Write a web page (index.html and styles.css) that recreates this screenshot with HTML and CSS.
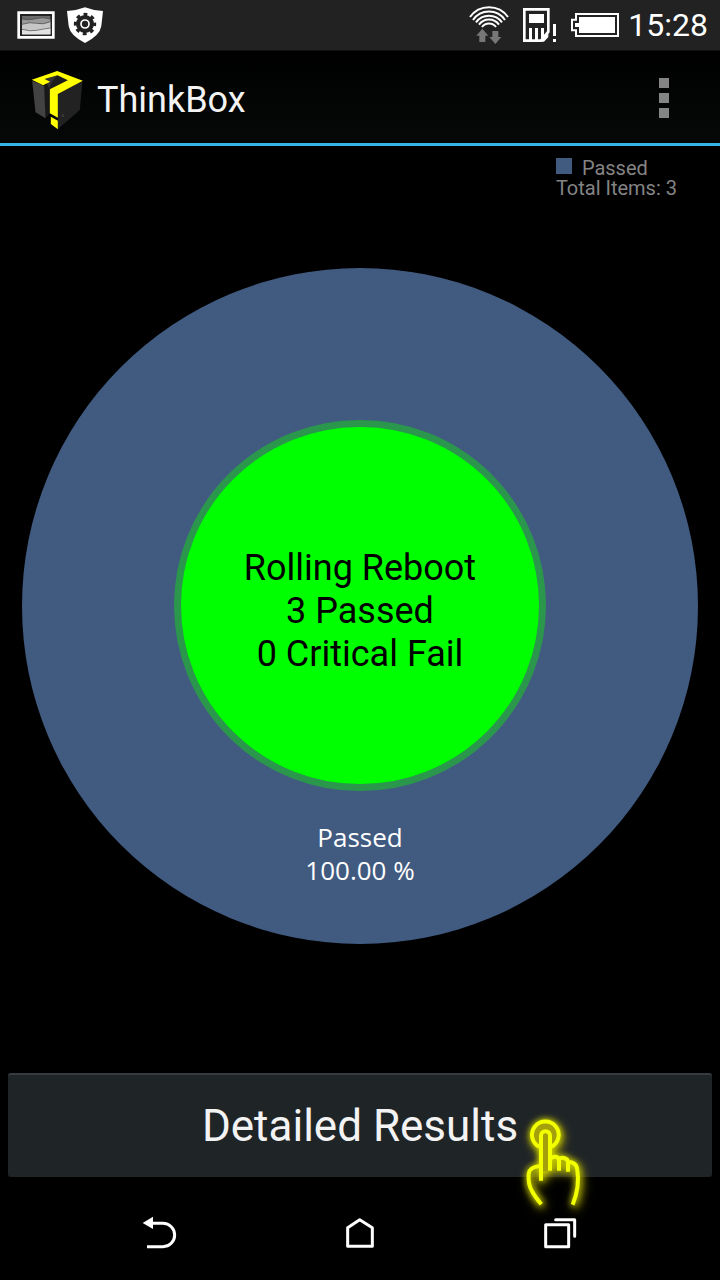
FILE: index.html
```html
<!DOCTYPE html>
<html lang="en">
<head>
<meta charset="utf-8">
<meta name="viewport" content="width=device-width, initial-scale=1">
<title>ThinkBox</title>
<link rel="stylesheet" href="styles.css">
</head>
<body>
<div class="status-bar">
  <div class="status-group">
    <svg class="icon-picture" viewBox="51 33 114 84" aria-hidden="true">
      <path fill="#fff" d="M52 34h112v82H52z"/>
      <path fill="#222" d="M60 42h96v66H60z"/>
      <path fill="#6a6a6a" d="M66 48h85v55H66z"/>
      <path fill="#999" d="M66 57q22 5 42-1t43 1v46H66z"/>
      <path fill="#c6c6c6" d="M66 73q24-8 44-3t41-5v38H66z"/>
      <path fill="#e2e2e2" d="M66 88q24 7 44 3t41-7v19H66z"/>
      <path fill="none" stroke="#444" stroke-width="2" d="M66 57q22 5 42-1t43 1M66 73q24-8 44-3t41-5M66 88q24 7 44 3t41-7"/>
    </svg>
    <svg class="icon-shield" viewBox="198 21 108 108" aria-hidden="true">
      <path fill="#fff" d="M252 22Q277 32 306 33Q303 60 301 78Q297 106 252 129Q207 106 203 78Q201 60 198 33Q227 32 252 22z"/>
      <circle cx="252" cy="72" r="22" fill="none" stroke="#222" stroke-width="10"/>
      <circle cx="252" cy="72" r="28" fill="none" stroke="#222" stroke-width="11" stroke-dasharray="11 10.99" stroke-dashoffset="5"/>
      <circle cx="252" cy="72" r="19" fill="#222"/>
      <circle cx="252" cy="72" r="12" fill="none" stroke="#fff" stroke-width="5"/>
    </svg>
  </div>
  <div class="status-group">
    <svg class="icon-wifi" viewBox="30 12 126 126" aria-hidden="true">
      <g fill="none" stroke="#fff" stroke-width="6">
        <path d="M36 51A70 70 0 0 1 150 51"/>
        <path d="M45 60A58 58 0 0 1 141 60"/>
        <path d="M54 67A48 48 0 0 1 132 67"/>
        <path d="M63 74A37 37 0 0 1 123 74"/>
        <path d="M72 81A26 26 0 0 1 114 81"/>
      </g>
      <path fill="#777" d="M73 86l18 21H82v19H64v-19H55zM112 132L94 111h9V93h18v18h9z"/>
    </svg>
    <svg class="icon-card" viewBox="192 21 108 108" aria-hidden="true">
      <path fill="none" stroke="#fff" stroke-width="8" d="M199 28h72v67l-22 27H199z"/>
      <path fill="#fff" d="M213 42h45v27h-45zM213 84h9v38h-9zM231 84h9v38h-9zM249 84h9v24l13-13v16l-13 14h-9zM285 72h9v36h-9zM285 117h9v9h-9z"/>
    </svg>
    <svg class="icon-battery" viewBox="330 36 150 78" aria-hidden="true">
      <path fill="none" stroke="#fff" stroke-width="6" d="M348 42h126v66H348V91H336V59h12z"/>
      <path fill="#fff" d="M357 51h108v48H357V81H345V69h12z"/>
    </svg>
    <time class="clock">15:28</time>
  </div>
</div>

<header class="app-bar">
  <svg class="logo" viewBox="94 60 158 180" aria-hidden="true">
    <path fill="#181818" d="M132 107l18-9v93l-14 14z"/>
    <path fill="#424242" d="M97 92l36 16 4 97-30-18z"/>
    <path fill="#333" d="M134 88l39-13 31 16-54 27z"/>
    <path fill="#1c1c1c" d="M160 90l13-15 31 16-54 27v-10z"/>
    <path fill="#222" d="M174 131l74-38-8 87-66 57z"/>
    <path fill="#ff0" d="M96 89L172 63l77 29-75 40v71l-24-13v-72l54-27-31-15-39 11 17 8-21 11z"/>
    <path fill="#ff0" d="M153 200l21 12v26l-21-16z"/>
    <circle cx="189" cy="197" r="4" fill="#3a3a3a"/>
  </svg>
  <h1 class="app-title">ThinkBox</h1>
  <button class="menu-button" type="button" aria-label="More options">
    <span class="menu-dot"></span><span class="menu-dot"></span><span class="menu-dot"></span>
  </button>
</header>

<main class="results">
  <section class="chart-area">
    <div class="donut">
      <div class="donut-center">
        <p class="summary">Rolling Reboot<br>3 Passed<br>0 Critical Fail</p>
      </div>
      <p class="slice-label">Passed<br>100.00 %</p>
    </div>
    <div class="legend">
      <div class="legend-row"><span class="swatch"></span>Passed</div>
      <div>Total Items: 3</div>
    </div>
  </section>
  <div class="action">
    <button class="details-button" type="button">Detailed Results</button>
    <svg class="tap-hand" viewBox="60 160 210 300" aria-hidden="true">
      <circle cx="136" cy="226" r="38" fill="#a4a00c"/>
      <path fill="#a4a00c" d="M123 335V228q13-24 26 0v107z"/>
      <g fill="none" stroke="#f2ff00" stroke-width="12">
        <path d="M118 261A40 40 0 1 1 154 261"/>
        <path d="M123 363V228a13 13 0 0 1 27 0V333"/>
        <path d="M150 298q7-8 16-7 11 1 11 12v30M177 298q6-5 15-3 12 3 12 13v28M204 309q9-3 17 2 9 5 11 20 8 50-14 104M119 319q-32 4-33 24-2 32 10 51 8 16 28 40"/>
      </g>
    </svg>
  </div>
</main>

<nav class="nav-bar" aria-label="System navigation">
  <button class="nav-button" type="button" aria-label="Back">
    <svg class="nav-icon" viewBox="66 75 108 108" aria-hidden="true"><path fill="#fff" d="M68 96l31-19v37z"/><path fill="none" stroke="#fff" stroke-width="9" d="M96 97h33a35 35 0 0 1 0 70H81"/></svg>
  </button>
  <button class="nav-button" type="button" aria-label="Home">
    <svg class="nav-icon" viewBox="666 75 108 108" aria-hidden="true"><path fill="none" stroke="#fff" stroke-width="9" stroke-linejoin="round" d="M683 166v-56l36-24 38 24v56z"/></svg>
  </button>
  <button class="nav-button" type="button" aria-label="Recent apps">
    <svg class="nav-icon" viewBox="66 45 108 108" aria-hidden="true"><g fill="none" stroke="#fff" stroke-width="9" stroke-linejoin="round" stroke-linecap="round"><path d="M77 71h69v66H77z"/><path d="M107 56h57v50"/></g></svg>
  </button>
</nav>
</body>
</html>
```

FILE: styles.css
```css
* { box-sizing: border-box; }

body {
  margin: 0;
  min-height: 100vh;
  display: flex;
  flex-direction: column;
  background: #000;
  color: #f3f3f3;
  font-family: Roboto, "Noto Sans", sans-serif;
}

h1, p { margin: 0; font-weight: 400; }
svg { display: block; flex: none; }
button { border: 0; padding: 0; color: inherit; font: inherit; cursor: pointer; }

.status-bar {
  display: flex;
  justify-content: space-between;
  height: 51px;
  padding: 0 12px 0 17px;
  background: #222;
  border-bottom: 1px solid #111;
}
.status-group { display: flex; align-items: center; gap: 12px; }
.icon-picture { width: 38px; height: 28px; }
.icon-shield { width: 36px; height: 36px; }
.icon-wifi { width: 42px; height: 42px; }
.icon-card { width: 36px; height: 36px; }
.icon-battery { width: 50px; height: 26px; margin-right: -4px; }
.clock { color: #fff; font-size: 32px; line-height: 50px; }

.app-bar {
  display: flex;
  align-items: center;
  height: 95px;
  padding: 5px 36px 0 31px;
  background: linear-gradient(#000, #060808);
  border-bottom: 3px solid #33b5e5;
}
.logo { width: 53px; height: 60px; }
.app-title { margin-left: 13px; font-size: 36px; line-height: 48px; }
.menu-button {
  display: flex;
  flex-direction: column;
  align-items: center;
  gap: 5px;
  width: 40px;
  margin-left: auto;
  padding-bottom: 3px;
  background: none;
}
.menu-dot { width: 10px; height: 10px; background: #848484; }

.results { flex: 1; display: flex; flex-direction: column; }
.chart-area {
  flex: 1;
  display: grid;
  align-items: center;
  padding: 0 22px;
}
.donut, .legend { grid-area: 1 / 1; }
.donut {
  display: grid;
  grid-template: 1fr 55% 1fr / 1fr 55% 1fr;
  aspect-ratio: 1;
  border-radius: 50%;
  background: #415a80;
}
.donut-center {
  grid-area: 2 / 2;
  display: grid;
  place-items: center;
  border: 7px solid #2a974c;
  border-radius: 50%;
  background: #0f0;
}
.summary {
  padding-top: 12px;
  color: #000;
  font-size: 36px;
  line-height: 43px;
  text-align: center;
  white-space: nowrap;
}
.slice-label {
  grid-area: 3 / 2;
  padding-top: 30px;
  color: #fff;
  font-family: "Open Sans", "Noto Sans", sans-serif;
  font-size: 26px;
  line-height: 33px;
  text-align: center;
}
.legend {
  align-self: start;
  justify-self: end;
  padding: 12px 21px 0 0;
  color: #848484;
  font-size: 20px;
  line-height: 20px;
}
.legend-row { display: flex; gap: 10px; }
.swatch { width: 16px; height: 16px; background: #415a80; }

.action { position: relative; padding: 8px 8px 0; }
.details-button {
  display: block;
  width: 100%;
  height: 104px;
  border-top: 2px solid #373b3d;
  border-radius: 3px;
  background: #1f2427;
  font-size: 44px;
}
.tap-hand {
  position: absolute;
  top: 48px;
  left: calc(50% + 160px);
  width: 70px;
  height: 100px;
  overflow: visible;
  filter: drop-shadow(0 0 3px #d8e000) drop-shadow(2px 3px 4px #a4a000);
  pointer-events: none;
}

.nav-bar {
  display: flex;
  justify-content: center;
  gap: 64px;
  padding: 39px 0 28px;
}
.nav-button {
  display: flex;
  justify-content: center;
  width: 136px;
  background: none;
}
.nav-icon { width: 36px; height: 36px; }
```
